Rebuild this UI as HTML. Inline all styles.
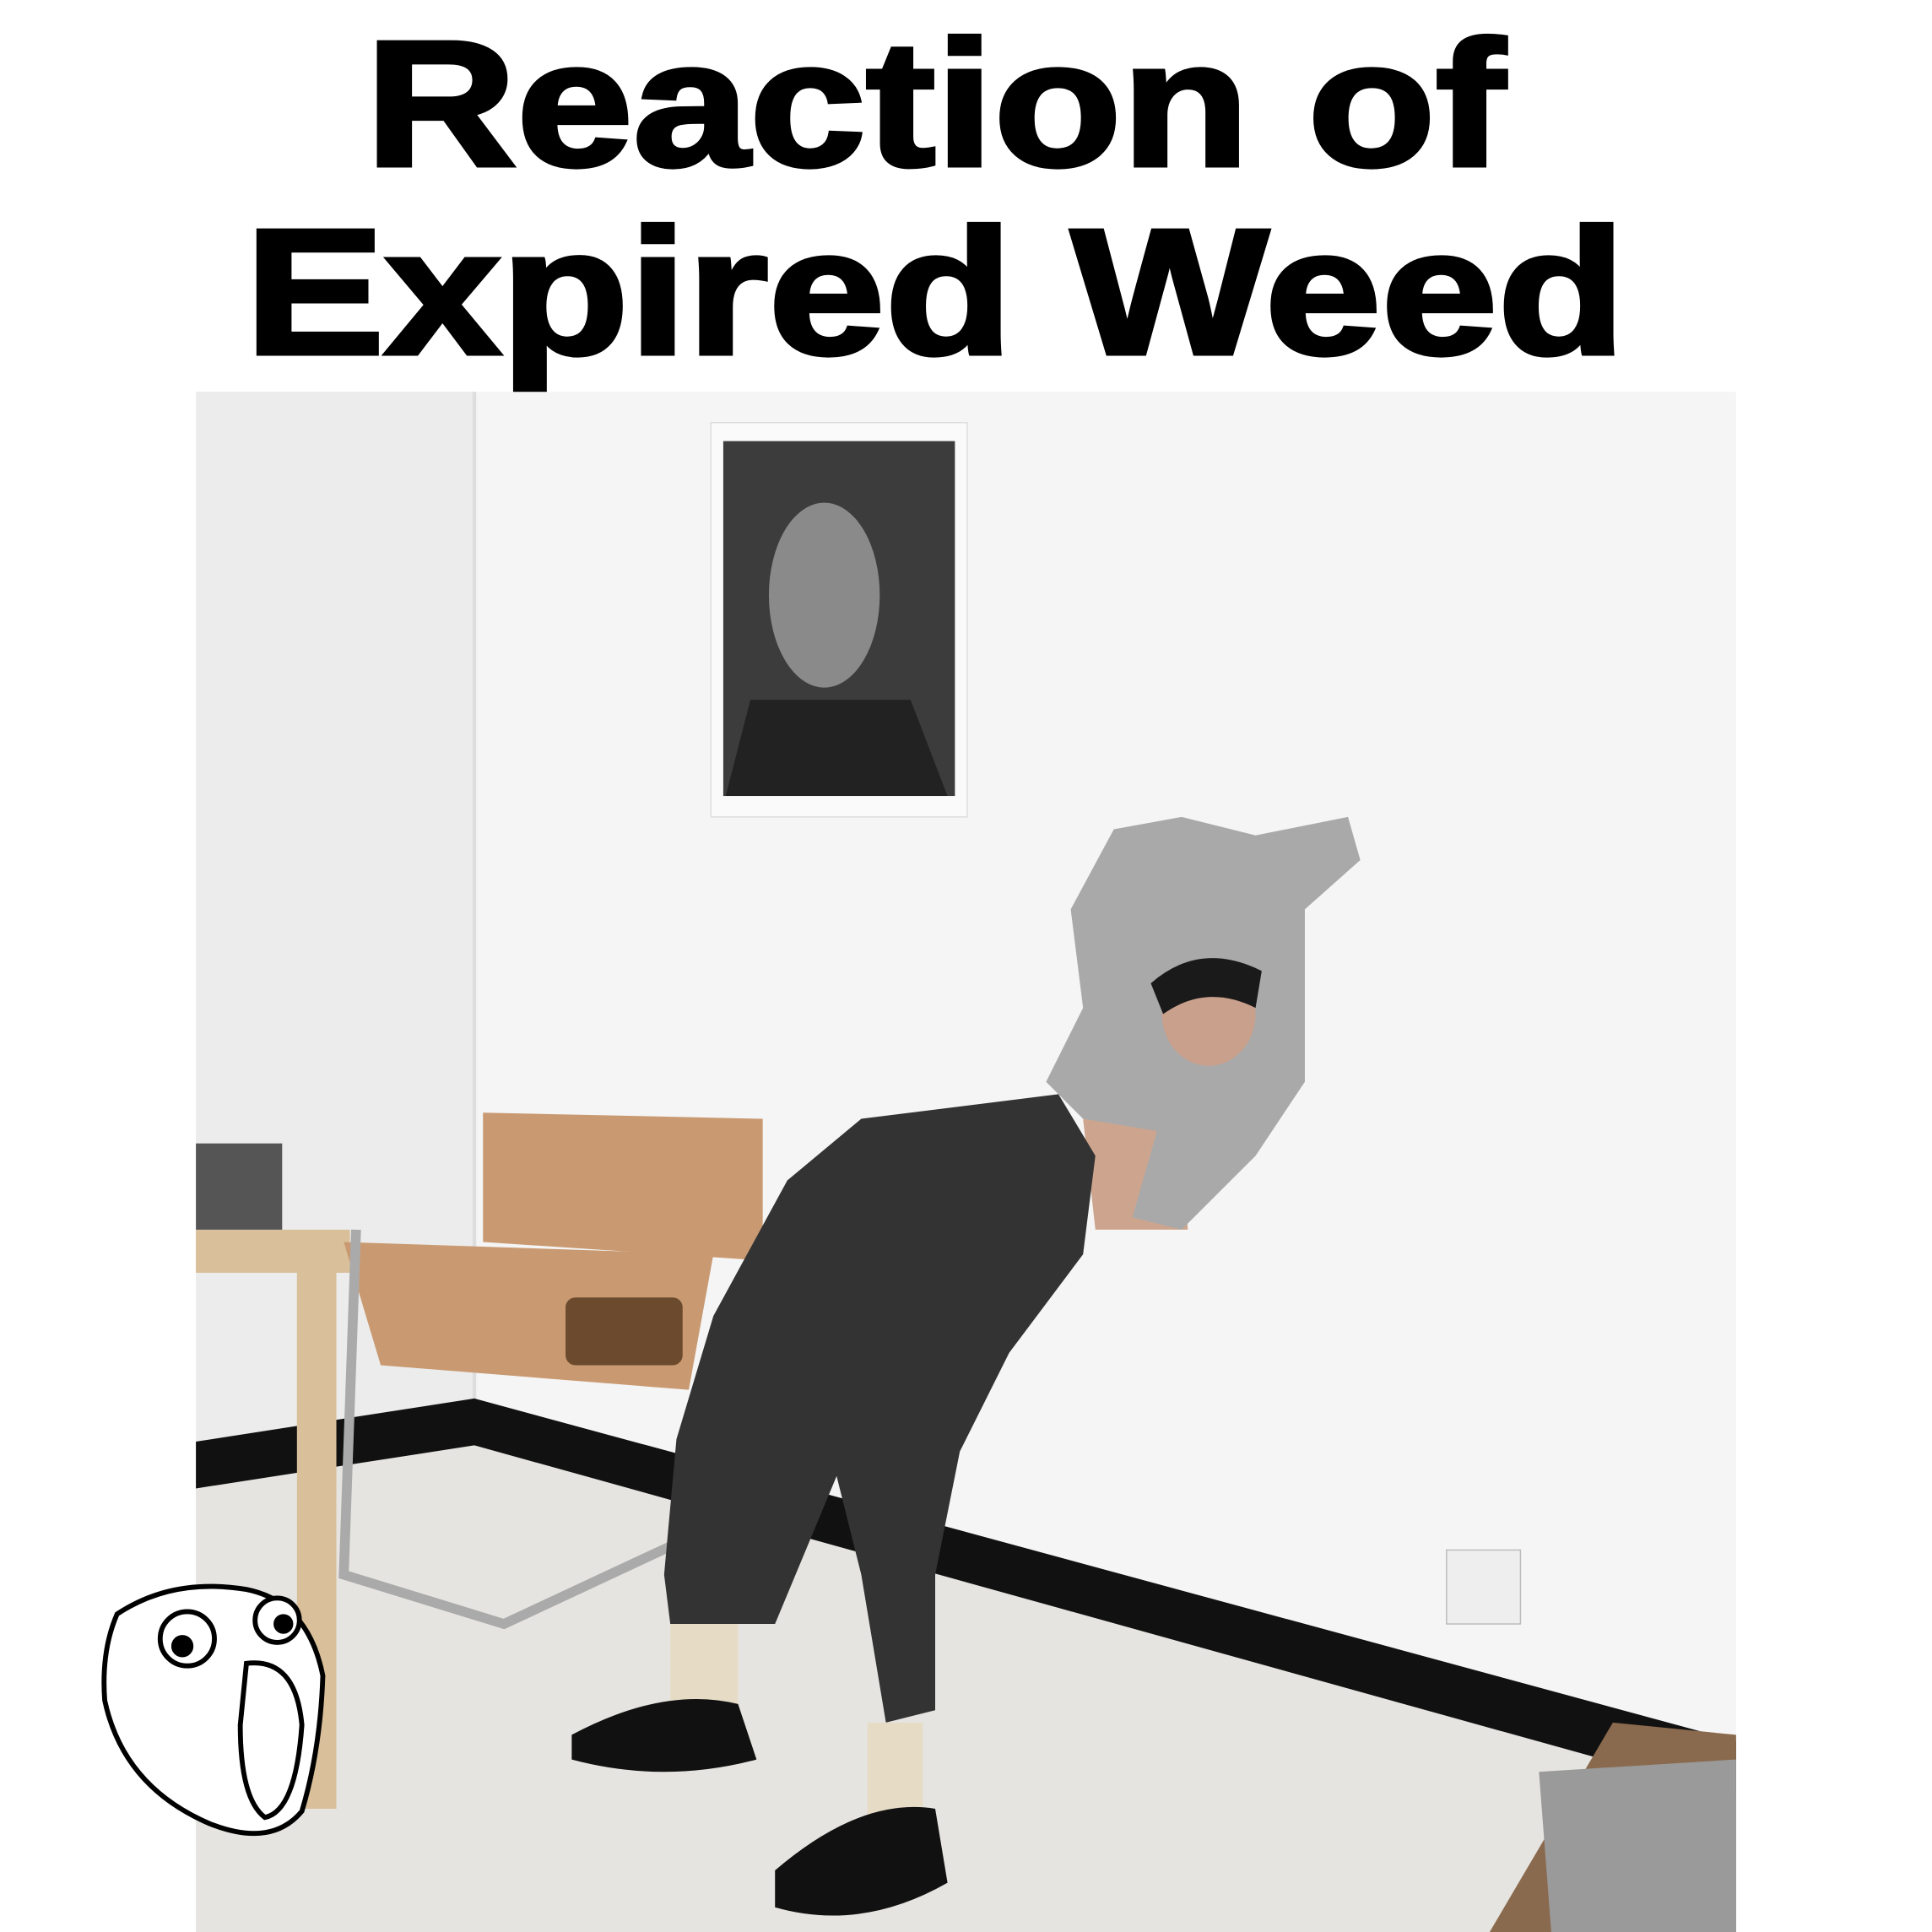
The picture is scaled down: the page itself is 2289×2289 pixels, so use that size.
<!DOCTYPE html>
<html><head><style>
html,body{margin:0;padding:0;background:#fff;width:2289px;height:2289px;overflow:hidden}
.t{position:absolute;left:-36px;width:2289px;text-align:center;font-family:"Liberation Sans",sans-serif;font-weight:900;color:#000;font-size:212px;line-height:1;white-space:nowrap}
.t span{display:inline-block;transform:scaleX(1.17);-webkit-text-stroke:5px #000}
svg{position:absolute;left:0;top:0}
</style></head><body>
<div class="t" style="top:17px"><span>Reaction of</span></div>
<div class="t" style="top:240px"><span>Expired Weed</span></div>
<svg width="2289" height="2289" viewBox="0 0 1568 1568">
<g transform="translate(159,318)">
<rect x="0" y="0" width="1250" height="1250" fill="#f5f5f5"/>
<rect x="0" y="0" width="226" height="860" fill="#ececec"/>
<line x1="226" y1="0" x2="226" y2="820" stroke="#ddd" stroke-width="3"/>
<polygon points="0,890 226,855 1250,1140 1250,1250 0,1250" fill="#e6e4e1"/>
<polygon points="0,852 226,817 1250,1095 1250,1140 226,855 0,890" fill="#111"/>
<rect x="418" y="25" width="208" height="320" fill="#fafafa" stroke="#ddd"/>
<rect x="428" y="40" width="188" height="288" fill="#3c3c3c"/>
<ellipse cx="510" cy="165" rx="45" ry="75" fill="#8a8a8a"/>
<polygon points="450,250 580,250 610,328 430,328" fill="#222"/>
<rect x="0" y="680" width="125" height="35" fill="#d9c09a"/>
<rect x="82" y="700" width="32" height="450" fill="#d9c09a"/>
<rect x="0" y="610" width="70" height="70" fill="#555"/>
<polygon points="233,585 460,590 460,705 233,690" fill="#c99a72"/>
<polygon points="120,690 420,700 400,810 150,790" fill="#c99a72"/>
<polyline points="130,680 120,960 250,1000 400,930" fill="none" stroke="#aaa" stroke-width="8"/>
<rect x="300" y="735" width="95" height="55" rx="8" fill="#6b4a2e"/>
<polygon points="720,590 800,600 805,680 730,680" fill="#cda58e"/>
<polygon points="745,355 800,345 860,360 935,345 945,380 900,420 900,560 860,620 800,680 760,670 780,600 720,590 690,560 720,500 710,420" fill="#a9a9a9"/>
<ellipse cx="822" cy="505" rx="38" ry="42" fill="#c9a08c"/>
<path d="M775,480 Q815,445 865,470 L860,500 Q820,480 785,505 Z" fill="#1a1a1a"/>
<polygon points="540,590 700,570 730,620 720,700 660,780 620,860 600,960 600,1070 560,1080 540,960 520,880 470,1000 385,1000 380,960 390,850 420,750 480,640" fill="#333"/>
<rect x="385" y="1000" width="55" height="70" fill="#e6dcc6"/>
<rect x="545" y="1080" width="45" height="80" fill="#e6dcc6"/>
<path d="M305,1090 Q380,1050 440,1065 L455,1110 Q380,1130 305,1110 Z" fill="#111"/>
<path d="M470,1200 Q540,1140 600,1150 L610,1210 Q540,1250 470,1230 Z" fill="#111"/>
<polygon points="1150,1080 1250,1090 1250,1250 1050,1250" fill="#8a6a4e"/>
<polygon points="1090,1120 1250,1110 1250,1250 1100,1250" fill="#9a9a9a"/>
<rect x="1015" y="940" width="60" height="60" fill="#eee" stroke="#bbb"/>
</g>
<g fill="#fff" stroke="#000" stroke-width="4">
<path d="M95,1310 Q140,1280 200,1290 Q250,1300 262,1360 Q260,1420 245,1470 Q220,1500 170,1480 Q100,1450 85,1380 Q82,1340 95,1310Z"/>
<circle cx="152" cy="1330" r="22"/><circle cx="148" cy="1336" r="7" fill="#000"/>
<circle cx="225" cy="1315" r="18"/><circle cx="230" cy="1318" r="6" fill="#000"/>
<path d="M200,1350 Q240,1345 245,1400 Q240,1470 215,1475 Q195,1460 195,1400Z"/>
</g>
</svg>
</body></html>
